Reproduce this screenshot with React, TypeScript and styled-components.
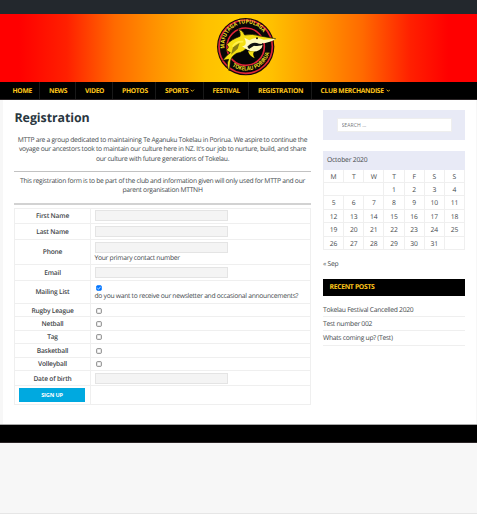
import React from "react";
import styled, { createGlobalStyle } from "styled-components";

const GlobalStyle = createGlobalStyle`
  * { box-sizing: border-box; }
  body {
    margin: 0;
    background: #f7f7f7;
    color: #44494c;
    font-family: "Open Sans", "Noto Sans", sans-serif;
    font-size: 6.75px;
    line-height: 9.35px;
    letter-spacing: -0.29px;
    text-rendering: geometricPrecision;
    overflow: hidden;
  }
`;

const Page = styled.div`
  display: flex;
  flex-direction: column;
  height: 514px;
  border-bottom: 1px solid #e6e6e6;
`;

const TopBar = styled.div`
  height: 14px;
  background: #23282d;
`;

const Banner = styled.header`
  height: 68px;
  padding: 1px 0 0 215px;
  background: linear-gradient(90deg, #ff0000 4%, #ff2000 14%, #ff6a00 24%, #ff9000 32%, #ffc000 43%, #ffcc00 50%, #ffc000 57%, #ff9000 68%, #ff6a00 76%, #ff2000 86%, #ff0000 94%);
`;

const Logo = styled.svg`
  display: block;
  width: 65px;
  height: 64px;
  letter-spacing: 0;
`;

const Nav = styled.nav`
  display: flex;
  height: 18px;
  padding-left: 3.5px;
  background: #000;
  border-bottom: 1px solid #2b2527;
`;

const NavItem = styled.a<{ $width: number; $last?: boolean }>`
  display: flex;
  align-items: center;
  gap: 2px;
  width: ${(p) => p.$width}px;
  padding-left: 9px;
  border-right: ${(p) => (p.$last ? "0" : "1px solid #191919")};
  color: #ffc61a;
  font-size: 6.75px;
  font-weight: 700;
  letter-spacing: -0.33px;
  white-space: nowrap;
`;

const Chevron = styled.svg`
  width: 4.5px;
  height: 3.4px;
  fill: none;
  stroke: #ffc61a;
  stroke-width: 0.8;
`;

const Content = styled.div`
  display: flex;
  height: 324px;
  margin: 0 1px 0 3px;
  padding: 0 11px;
  background: #fff;
`;

const Main = styled.main`
  width: 297px;
  margin-right: 12px;
`;

const Title = styled.h1`
  margin: 10px 0 0;
  padding-left: 0.5px;
  color: #2a373f;
  font-size: 12.4px;
  line-height: 16px;
  font-weight: 700;
  letter-spacing: -0.06px;
`;

const Intro = styled.p`
  height: 36px;
  margin: 9px 0 0;
  text-align: center;
  white-space: nowrap;
`;

const Note = styled(Intro)`
  height: 27px;
  margin-top: 4px;
`;

const Rule = styled.hr<{ $thick?: boolean }>`
  height: ${(p) => (p.$thick ? 2 : 1)}px;
  margin: 0;
  border: 0;
  background: ${(p) => (p.$thick ? "#d2d2d2" : "#c2c2c2")};
`;

const Form = styled.form`
  margin-top: 2.5px;
  border: 1px solid #efefef;
  border-bottom: 0;
`;

const Row = styled.div<{ $height: number }>`
  display: grid;
  grid-template-columns: 76px 1fr;
  height: ${(p) => p.$height}px;
  border-bottom: 1px solid #efefef;
`;

const Label = styled.label`
  display: flex;
  align-items: center;
  justify-content: center;
  border-right: 1px solid #efefef;
  color: #3f464a;
  font-weight: 600;
  font-size: 6.65px;
  letter-spacing: -0.2px;
`;

const Cell = styled.div`
  display: flex;
  flex-direction: column;
  justify-content: center;
  align-items: flex-start;
  padding-left: 3.5px;
  white-space: nowrap;
`;

const Input = styled.input`
  width: 133px;
  height: 11px;
  padding: 0 3px;
  border: 1px solid #e4e4e4;
  background: #f4f4f4;
  font: inherit;
`;

const Checkbox = styled.svg`
  display: block;
  flex: none;
  width: 6px;
  height: 6px;
  margin: 1px 0 0 1.5px;
`;

const Hint = styled.span`
  line-height: 9px;
`;

const SubmitCell = styled(Label).attrs({ as: "div" })``;

const Submit = styled.button`
  width: 66px;
  height: 14.5px;
  margin-right: 1px;
  padding: 0;
  border: 0;
  background: #00a9e0;
  color: #fff;
  font: 700 5.6px "Open Sans", sans-serif;
  letter-spacing: -0.15px;
`;

const Sidebar = styled.aside`
  width: 142px;
`;

const SearchPanel = styled.div`
  height: 30px;
  margin-top: 10px;
  padding: 8px 13.5px;
  background: #e8eaf6;
`;

const SearchInput = styled.input`
  display: block;
  width: 115px;
  height: 14px;
  padding: 0 4px;
  border: 1px solid #eeeeee;
  background: #fff;
  font: 5.1px "Open Sans", sans-serif;
  letter-spacing: 0.05px;
  &::placeholder { color: #77797c; opacity: 1; }
`;

const Caption = styled.div`
  height: 18.5px;
  margin-top: 11px;
  padding: 0 4px;
  background: #e8eaf6;
  line-height: 18.5px;
  letter-spacing: -0.2px;
`;

const Calendar = styled.div`
  display: grid;
  grid-template-columns: repeat(7, 1fr);
  grid-auto-rows: 13.45px;
  border-left: 1px solid #efefef;
`;

const Day = styled.span<{ $span?: number }>`
  grid-column: span ${(p) => p.$span ?? 1};
  border-right: 1px solid #efefef;
  border-bottom: 1px solid #efefef;
  line-height: 14px;
  letter-spacing: -0.1px;
  text-align: center;
`;

const Previous = styled.a`
  display: block;
  margin-top: 8.5px;
`;

const WidgetTitle = styled.h2`
  height: 16.5px;
  margin: 11.3px 0 7px;
  padding-left: 6.5px;
  background: #000;
  color: #ffc61a;
  font-size: 6.8px;
  line-height: 16.5px;
  font-weight: 700;
  letter-spacing: -0.32px;
`;

const Post = styled.a`
  display: block;
  height: 14.3px;
  border-bottom: 1px solid #efefef;
  line-height: 14px;
`;

const Footer = styled.footer`
  height: 19px;
  background: #000;
  border-top: 1px solid #a8a8a8;
  border-bottom: 1px solid #2b2527;
`;

const menu = [
  { label: "HOME", width: 36.5 },
  { label: "NEWS", width: 36 },
  { label: "VIDEO", width: 37 },
  { label: "PHOTOS", width: 43 },
  { label: "SPORTS", width: 47.5, sub: true },
  { label: "FESTIVAL", width: 45.5 },
  { label: "REGISTRATION", width: 62.5 },
  { label: "CLUB MERCHANDISE", width: 90, sub: true },
];

type Field = { label: string; height: number; kind: "text" | "check"; hint?: string; checked?: boolean };

const fields: Field[] = [
  { label: "First Name", height: 15.5, kind: "text" },
  { label: "Last Name", height: 16, kind: "text" },
  { label: "Phone", height: 25, kind: "text", hint: "Your primary contact number" },
  { label: "Email", height: 16, kind: "text" },
  { label: "Mailing List", height: 23, kind: "check", checked: true, hint: "do you want to receive our newsletter and occasional announcements?" },
  { label: "Rugby League", height: 13.4, kind: "check" },
  { label: "Netball", height: 13.4, kind: "check" },
  { label: "Tag", height: 13.4, kind: "check" },
  { label: "Basketball", height: 13.4, kind: "check" },
  { label: "Volleyball", height: 13.4, kind: "check" },
  { label: "Date of birth", height: 15.5, kind: "text" },
];

const weekdays = ["M", "T", "W", "T", "F", "S", "S"];
const days = Array.from({ length: 31 }, (_, i) => i + 1);
const posts = ["Tokelau Festival Cancelled 2020", "Test number 002", "Whats coming up? (Test)"];

function ClubLogo() {
  return (
    <Logo viewBox="45 15 195 192" aria-label="Mafutaga Tupulaga Tokelau Porirua">
      <defs>
        <path id="upperArc" d="M75 119 A64 64 0 1 1 201 98" />
        <path id="lowerArc" d="M92 165 A72 72 0 0 0 210 112" />
      </defs>
      <circle cx="137" cy="110" r="86" fill="#16070a" />
      <circle cx="137" cy="110" r="80" fill="#080808" stroke="#df2638" strokeWidth="5" />
      <circle cx="137" cy="110" r="56" fill="#050505" stroke="#df2638" strokeWidth="5" />
      <g fill="#f0df22" fontFamily="Open Sans, sans-serif" fontWeight="700" fontSize="17">
        <text><textPath href="#upperArc" startOffset="4" textLength="172" lengthAdjust="spacingAndGlyphs">MAFUTAGA TUPULAGA</textPath></text>
        <text><textPath href="#lowerArc" startOffset="6" textLength="138" lengthAdjust="spacingAndGlyphs">TOKELAU PORIRUA</textPath></text>
      </g>
      <path d="M114 57 Q129 60 134 75 Q158 70 180 78 L227 86 Q218 94 196 96 Q158 86 145 108 Q132 127 110 130 Q93 139 91 156 L88 183 Q77 166 86 148 L68 151 Q78 137 91 128 L78 120 Q91 112 80 104 Q94 88 120 79 Q123 66 114 57Z" fill="#f4df13" stroke="#101005" strokeWidth="2" />
      <path d="M133 83 L148 91 Q167 78 191 89 L228 86 Q207 99 185 100 Q192 111 178 120 Q162 130 142 119 L126 109 Q144 107 133 83Z" fill="#fffac0" />
      <path d="M142 110 Q157 93 177 101 L193 103 Q177 110 162 107 L147 117Z" fill="#111" />
      <path d="M144 124 L164 124 Q155 130 164 145 Q149 139 144 124Z" fill="#f4df13" />
      <path d="M99 112 L119 98 L113 116 L93 134Z" fill="#8b8012" />
      <path d="M98 110 Q108 93 130 95" fill="none" stroke="#fff04b" strokeWidth="5" />
      <circle cx="171" cy="85" r="3" fill="#111" />
    </Logo>
  );
}

function FieldRow({ field }: { field: Field }) {
  return (
    <Row $height={field.height}>
      <Label>{field.label}</Label>
      <Cell>
        {field.kind === "text" ? (
          <Input aria-label={field.label} />
        ) : (
          <Checkbox viewBox="0 0 6 6" role="checkbox" aria-checked={!!field.checked} aria-label={field.label}>
            <rect
              x="0.7" y="0.7" width="4.6" height="4.6" rx="0.6" strokeWidth="0.9"
              fill={field.checked ? "#0075ff" : "#fff"}
              stroke={field.checked ? "#0075ff" : "#777"}
            />
            {field.checked && <path d="M1.3 3 L2.5 4.2 L4.7 1.7" fill="none" stroke="#fff" strokeWidth="0.8" />}
          </Checkbox>
        )}
        {field.hint && <Hint>{field.hint}</Hint>}
      </Cell>
    </Row>
  );
}

export default function App() {
  return (
    <>
      <GlobalStyle />
      <Page>
        <TopBar />
        <Banner><ClubLogo /></Banner>
        <Nav>
          {menu.map((item, i) => (
            <NavItem key={item.label} $width={item.width} $last={i === menu.length - 1}>
              {item.label}
              {item.sub && <Chevron viewBox="0 0 4 3"><path d="M.5 .6 L2 2.1 L3.5 .6" /></Chevron>}
            </NavItem>
          ))}
        </Nav>
        <Content>
          <Main>
            <Title>Registration</Title>
            <Intro>
              MTTP are a group dedicated to maintaining Te Aganuku Tokelau in Porirua. We aspire to continue the<br />
              voyage our ancestors took to maintain our culture here in NZ. It's our job to nurture, build, and share<br />
              our culture with future generations of Tokelau.
            </Intro>
            <Rule />
            <Note>
              This registration form is to be part of the club and information given will only used for MTTP and our<br />
              parent organisation MTTNH
            </Note>
            <Rule $thick />
            <Form>
              {fields.map((field) => <FieldRow key={field.label} field={field} />)}
              <Row $height={18.5}>
                <SubmitCell><Submit type="button">SIGN UP</Submit></SubmitCell>
                <Cell />
              </Row>
            </Form>
          </Main>
          <Sidebar>
            <SearchPanel><SearchInput placeholder="SEARCH …" /></SearchPanel>
            <Caption>October 2020</Caption>
            <Calendar>
              {weekdays.map((d, i) => <Day key={i}>{d}</Day>)}
              <Day $span={3} />
              {days.map((d) => <Day key={d}>{d}</Day>)}
              <Day />
            </Calendar>
            <Previous>« Sep</Previous>
            <WidgetTitle>RECENT POSTS</WidgetTitle>
            {posts.map((p) => <Post key={p}>{p}</Post>)}
          </Sidebar>
        </Content>
        <Footer />
      </Page>
    </>
  );
}
